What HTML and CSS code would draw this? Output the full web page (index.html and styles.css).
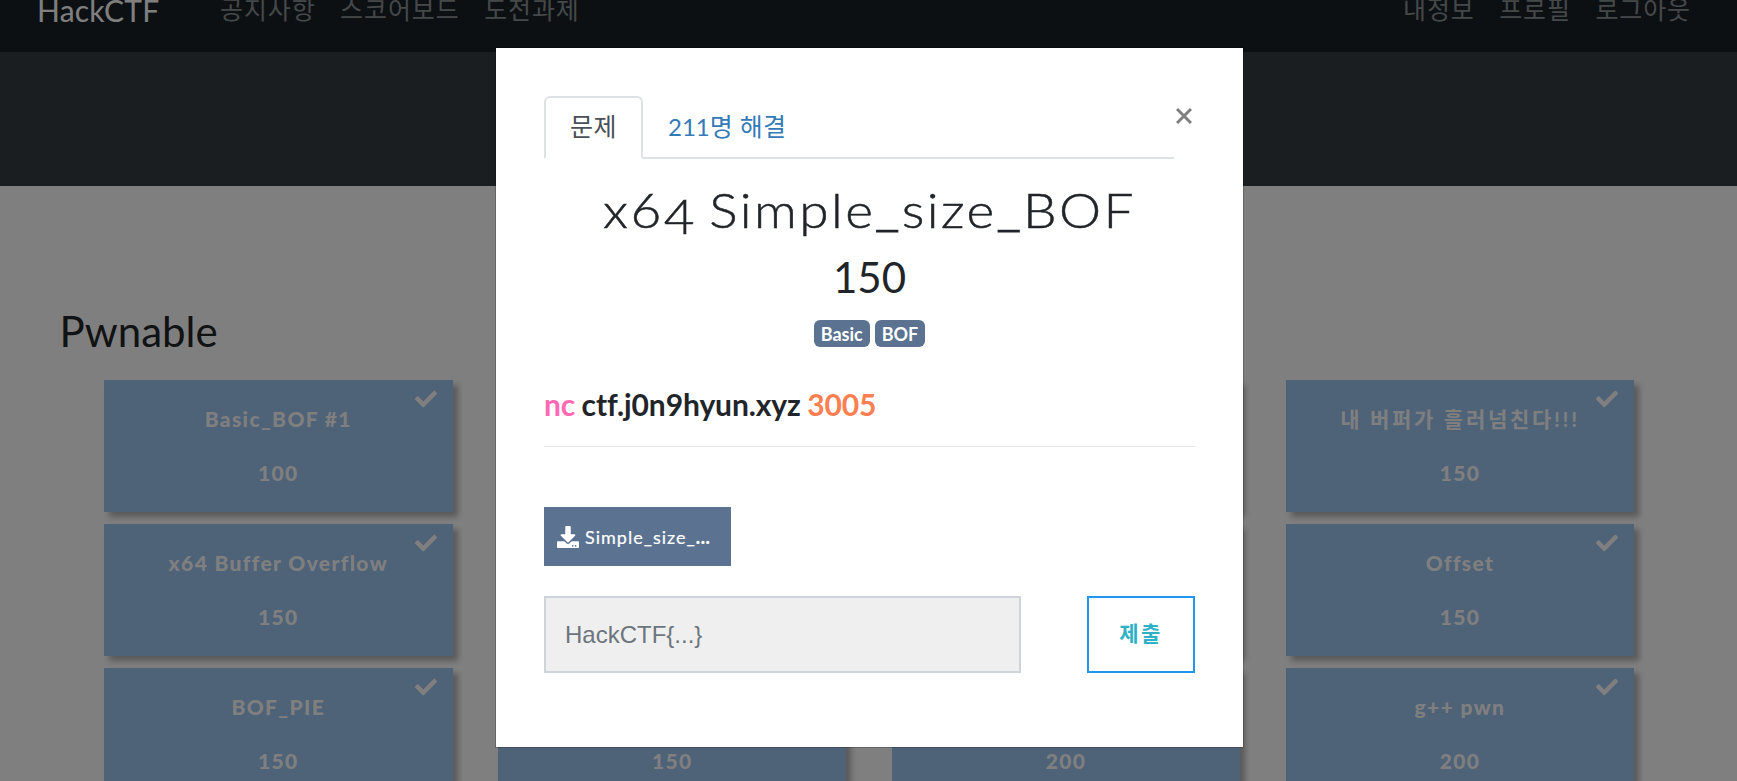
FILE: index.html
```html
<!DOCTYPE html>
<html lang="ko">
<head>
<meta charset="utf-8">
<title>HackCTF</title>
<link rel="stylesheet" href="styles.css">
</head>
<body>
<svg class="defs" width="0" height="0">
  <symbol id="check" viewBox="0 0 512 512"><path d="M173.898 439.404l-166.4-166.4c-9.997-9.997-9.997-26.206 0-36.204l36.203-36.204c9.997-9.998 26.207-9.998 36.204 0L192 312.69 432.095 72.596c9.997-9.997 26.207-9.997 36.204 0l36.203 36.204c9.997 9.997 9.997 26.206 0 36.204l-294.4 294.401c-9.998 9.997-26.207 9.997-36.204-.001z"/></symbol>
</svg>
<nav class="navbar">
  <a class="brand">HackCTF</a>
  <div class="links"><a>공지사항</a><a>스코어보드</a><a>도전과제</a></div>
  <div class="links right"><a>내정보</a><a>프로필</a><a>로그아웃</a></div>
</nav>
<header class="banner"></header>
<main class="board">
  <h3 class="category">Pwnable</h3>
  <div class="grid">
    <div class="card"><svg class="check"><use href="#check"/></svg><p>Basic_BOF #1</p><p>100</p></div>
    <div class="card"></div>
    <div class="card"></div>
    <div class="card"><svg class="check"><use href="#check"/></svg><p class="ko">내 버퍼가 흘러넘친다!!!</p><p>150</p></div>
    <div class="card"><svg class="check"><use href="#check"/></svg><p>x64 Buffer Overflow</p><p>150</p></div>
    <div class="card"></div>
    <div class="card"></div>
    <div class="card"><svg class="check"><use href="#check"/></svg><p>Offset</p><p>150</p></div>
    <div class="card"><svg class="check"><use href="#check"/></svg><p>BOF_PIE</p><p>150</p></div>
    <div class="card"><p>&nbsp;</p><p>150</p></div>
    <div class="card"><p>&nbsp;</p><p>200</p></div>
    <div class="card"><svg class="check"><use href="#check"/></svg><p>g++ pwn</p><p>200</p></div>
  </div>
</main>
<div class="backdrop">
  <section class="modal">
    <div class="top">
      <div class="tabs"><a class="tab active">문제</a><a class="tab solves">211<span>명 해결</span></a></div>
      <button class="close"><svg viewBox="0 0 16 16"><path d="M1 1L15 15M15 1L1 15"/></svg></button>
    </div>
    <h2 class="name">x6<span class="low">4</span> Simple<span class="bar">_</span>size<span class="bar">_</span>BOF</h2>
    <h3 class="value">150</h3>
    <div class="tags"><span>Basic</span><span>BOF</span></div>
    <p class="desc"><span class="cmd">nc</span> ctf.j0n9hyun.xyz <span class="port">3005</span></p>
    <hr>
    <a class="file"><svg viewBox="0 0 512 512"><path d="M216 0h80c13.300 0 24 10.700 24 24v168h87.700c17.800 0 26.700 21.500 14.100 34.100L269.700 378.300c-7.500 7.500-19.800 7.500-27.300 0L90.100 226.100c-12.600-12.600-3.700-34.100 14.100-34.100H192V24c0-13.300 10.700-24 24-24zm296 376v112c0 13.300-10.700 24-24 24H24c-13.300 0-24-10.700-24-24V376c0-13.300 10.700-24 24-24h146.700l49 49c20.100 20.100 52.500 20.100 72.600 0l49-49H488c13.300 0 24 10.700 24 24zm-124 88c0-11-9-20-20-20s-20 9-20 20 9 20 20 20 20-9 20-20zm64 0c0-11-9-20-20-20s-20 9-20 20 9 20 20 20 20-9 20-20z"/></svg><span>Simple_size_<b>...</b></span></a>
    <div class="submit"><input type="text" placeholder="HackCTF{...}"><button class="send">제출</button></div>
  </section>
</div>
</body>
</html>
```
FILE: styles.css
```css
* { box-sizing: border-box; }
body {
  margin: 0;
  height: 781px;
  overflow: hidden;
  background: #fff;
  color: #212529;
  font-family: Lato, "Noto Sans CJK KR", sans-serif;
  font-size: 24px;
  font-variant-ligatures: none;
}
h2, h3, p { margin: 0; font-weight: 400; }
.defs { position: absolute; }
.navbar {
  height: 52px;
  padding: 0 46px 0 37px;
  display: flex;
  background: #182126;
  line-height: 20px;
}
.brand { width: 183px; font-size: 30px; letter-spacing: .2px; color: #fff; }
.links { display: flex; gap: 24.500px; font-size: 25px; line-height: 18px; letter-spacing: .9px; color: #8b9092; }
.right { margin-left: auto; }
.banner { height: 134px; background: #343c41; }
.board { padding: 120px 0 0; }
.category { margin-left: 59.500px; font-size: 42px; line-height: 50px; }
.grid {
  margin: 24px 0 0 104px;
  display: grid;
  grid-template-columns: repeat(4, 348.600px);
  grid-auto-rows: 132px;
  gap: 12px 45.300px;
}
.card {
  position: relative;
  padding-top: 24px;
  display: flex;
  flex-direction: column;
  gap: 24px;
  text-align: center;
  background: #9dc4f1;
  box-shadow: 5px 5px 6px rgba(0, 0, 0, .3);
  color: #fff;
  font-size: 21px;
  line-height: 30px;
  letter-spacing: 1.350px;
}
.card p { font-weight: 900; }
.card .ko { font-weight: 700; letter-spacing: 2.700px; }
.check { position: absolute; right: 16px; top: 8px; width: 22px; height: 22px; fill: #fff; }
.backdrop {
  position: absolute;
  inset: 0;
  padding-top: 47px;
  background: rgba(0, 0, 0, .5);
}
.modal {
  width: 749px;
  height: 701px;
  margin-left: 495px;
  padding: 48px;
  background: #fff;
  background-clip: padding-box;
  border: 1px solid rgba(0, 0, 0, .2);
}
.top { display: flex; }
.tabs { width: 630px; height: 63px; display: flex; border-bottom: 2px solid #dee2e6; }
.tab {
  height: 63px;
  padding: 10px 23px;
  border: 2px solid transparent;
  line-height: 36px;
  color: #337ab7;
}
.solves span { font-size: 25px; letter-spacing: .3px; }
.active {
  width: 99px;
  padding: 10px 0 0 24px;
  border-color: #dee2e6 #dee2e6 #fff;
  border-radius: 6px 6px 0 0;
  background: #fff;
  color: #495057;
  font-size: 25px;
  letter-spacing: .5px;
}
.close { height: 16px; margin: 12px 0 0 2px; padding: 0; border: 0; background: none; }
.close svg { display: block; width: 16px; height: 16px; fill: none; stroke: #808080; stroke-width: 3; }
.name {
  margin-top: 22px;
  font-size: 48px;
  font-weight: 300;
  line-height: 58px;
  letter-spacing: 2.200px;
  word-spacing: -4px;
  text-align: center;
  white-space: nowrap;
  transform: scaleX(1.107);
  -webkit-text-stroke: .5px #212529;
}
.low { position: relative; top: 6px; }
.bar { position: relative; top: -2px; -webkit-text-stroke-width: 1.200px; }
.value { margin-top: 13px; font-size: 42px; line-height: 50px; text-align: center; }
.tags { margin-top: 18px; display: flex; justify-content: center; gap: 5px; }
.tags span { height: 27px; padding: 0 7px; border-radius: 6px; background: #5b7290; color: #fff; font-size: 18px; font-weight: 700; line-height: 28px; }
.desc { margin-top: 39px; font-size: 30px; font-weight: 700; line-height: 36px; letter-spacing: -.1px; word-spacing: -.8px; white-space: nowrap; }
.cmd { color: #ff69b4; }
.port { color: #ff7f50; }
hr { margin: 24px 0 60px; border: 0; border-top: 1px solid #e5e5e5; }
.file {
  width: 187px;
  height: 59px;
  padding-left: 13px;
  display: flex;
  align-items: center;
  gap: 6px;
  background: #5b7290;
  color: #fff;
  font-size: 18px;
  letter-spacing: 1px;
  -webkit-text-stroke: .2px #fff;
}
.file b { font-weight: 900; letter-spacing: .6px; }
.file svg { width: 22px; height: 22px; fill: #fff; }
.submit { margin-top: 30px; display: flex; justify-content: space-between; }
input {
  width: 477px;
  height: 77px;
  padding: 0 19px;
  border: 2px solid #ced4da;
  background: #efefef;
  font: 24px "Liberation Sans", sans-serif;
}
input::placeholder { color: #6c757d; }
.send {
  width: 108px;
  height: 77px;
  padding: 0 0 5px;
  border: 2px solid #2196f3;
  background: #fff;
  color: #2eb1c6;
  font: 700 21px "Noto Sans CJK KR", sans-serif;
  letter-spacing: 2.500px;
}
```
